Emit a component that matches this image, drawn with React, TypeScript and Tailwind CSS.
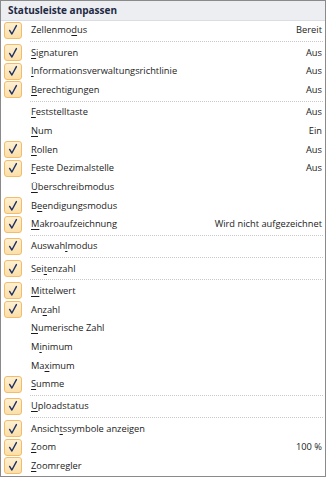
import React from "react";

type Item = { label: string; checked: boolean; value?: string };

// "&" marks the access key letter, like in Windows menus
const groups: Item[][] = [
  [{ label: "Zellenmo&dus", checked: true, value: "Bereit" }],
  [
    { label: "&Signaturen", checked: true, value: "Aus" },
    { label: "&Informationsverwaltungsrichtlinie", checked: true, value: "Aus" },
    { label: "&Berechtigungen", checked: true, value: "Aus" },
  ],
  [
    { label: "&Feststelltaste", checked: false, value: "Aus" },
    { label: "&Num", checked: false, value: "Ein" },
    { label: "&Rollen", checked: true, value: "Aus" },
    { label: "&Feste Dezimalstelle", checked: true, value: "Aus" },
    { label: "&Überschreibmodus", checked: false },
    { label: "B&eendigungsmodus", checked: true },
    { label: "&Makroaufzeichnung", checked: true, value: "Wird nicht aufgezeichnet" },
  ],
  [{ label: "Auswah&lmodus", checked: true }],
  [{ label: "Sei&tenzahl", checked: true }],
  [
    { label: "&Mittelwert", checked: true },
    { label: "An&zahl", checked: true },
    { label: "&Numerische Zahl", checked: false },
    { label: "M&inimum", checked: false },
    { label: "Ma&ximum", checked: false },
    { label: "&Summe", checked: true },
  ],
  [{ label: "&Uploadstatus", checked: true }],
  [
    { label: "Ansich&tssymbole anzeigen", checked: true },
    { label: "&Zoom", checked: true, value: "100 %" },
    { label: "&Zoomregler", checked: true },
  ],
];

function Label({ text }: { text: string }) {
  const i = text.indexOf("&");
  if (i < 0) return <span>{text}</span>;
  return (
    <span>
      {text.slice(0, i)}
      <span className="underline underline-offset-[1.5px] decoration-[1px]">{text[i + 1]}</span>
      {text.slice(i + 2)}
    </span>
  );
}

function CheckBox() {
  return (
    <div className="w-[18px] h-[17px] rounded-[3px] border border-[#f2bc6a] bg-gradient-to-b from-[#fef0d2] to-[#fcdfa8] flex items-center justify-center">
      <svg width="12" height="12" viewBox="0 0 12 12">
        <path d="M2.6 6.4 L4.9 10 L9.4 1.6" fill="none" stroke="#1c3068" strokeWidth="1.4" strokeLinecap="round" strokeLinejoin="round" />
      </svg>
    </div>
  );
}

function Row({ item }: { item: Item }) {
  return (
    <div className="h-[18.7px] flex items-center pr-[3px]">
      <div className="w-[30px] pl-[3px] flex items-center">{item.checked && <CheckBox />}</div>
      <Label text={item.label} />
      {item.value && <span className="ml-auto">{item.value}</span>}
    </div>
  );
}

function Separator() {
  return (
    <div className="h-[3.5px] flex items-center pl-[29px] pr-[2px]">
      <div className="w-full border-t border-dotted border-[#c8c8c8]" />
    </div>
  );
}

export default function App() {
  return (
    <div className="w-[326px] h-[477px] border border-[#8a8a8a] bg-white flex flex-col text-[9.3px] text-[#1b1b1b] font-['Open_Sans',sans-serif] overflow-hidden">
      <div className="h-[20px] shrink-0 bg-[#eceef2] border-b border-[#dadde3] px-[7px] flex items-center font-bold text-[10px] text-[#1f2a44]">
        Statusleiste anpassen
      </div>
      {groups.map((g, gi) => (
        <React.Fragment key={gi}>
          {gi > 0 && <Separator />}
          {g.map((item) => (
            <Row key={item.label} item={item} />
          ))}
        </React.Fragment>
      ))}
    </div>
  );
}
